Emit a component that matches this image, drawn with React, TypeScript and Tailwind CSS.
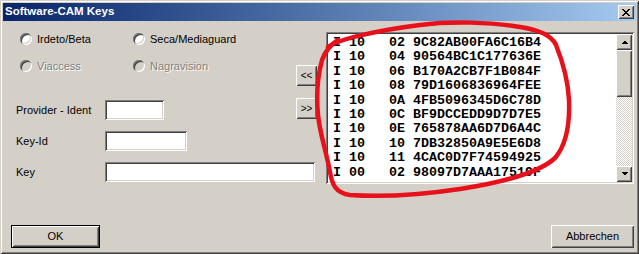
import clsx from "clsx"

const raised =
  "bg-[#d4d0c8] shadow-[inset_1px_1px_#fff,inset_-1px_-1px_#404040,inset_2px_2px_#d4d0c8,inset_-2px_-2px_#808080]"
const sunken =
  "shadow-[inset_1px_1px_#808080,inset_-1px_-1px_#fff,inset_2px_2px_#404040,inset_-2px_-2px_#d4d0c8]"

const rows = [
  "I 10   02 9C82AB00FA6C16B4",
  "I 10   04 90564BC1C177636E",
  "I 10   06 B170A2CB7F1B084F",
  "I 10   08 79D1606836964FEE",
  "I 10   0A 4FB5096345D6C78D",
  "I 10   0C BF9DCCEDD9D7D7E5",
  "I 10   0E 765878AA6D7D6A4C",
  "I 10   10 7DB32850A9E5E6D8",
  "I 10   11 4CAC0D7F74594925",
  "I 00   02 98097D7AAA17519F",
]

function Radio({ label, disabled }: { label: string; disabled?: boolean }) {
  return (
    <div className="flex h-[12px] items-center gap-[5px]">
      <span
        className={clsx(
          "h-[12px] w-[12px] shrink-0 rounded-full",
          sunken,
          disabled ? "bg-[#d4d0c8]" : "bg-white"
        )}
      />
      <span
        className={
          disabled ? "text-[#808080] [text-shadow:1px_1px_0_#fff]" : "text-black"
        }
      >
        {label}
      </span>
    </div>
  )
}

function Field({ label, width }: { label: string; width: string }) {
  return (
    <div className="flex h-[20px] items-center pl-[13px]">
      <span className="w-[89px] shrink-0">{label}</span>
      <div className={clsx("h-[20px] shrink-0 bg-white", sunken, width)} />
    </div>
  )
}

function Arrow({ down }: { down?: boolean }) {
  return (
    <div className={clsx("flex h-[16px] w-[16px] items-center justify-center", raised)}>
      <svg width="7" height="4" viewBox="0 0 7 4" shapeRendering="crispEdges">
        <polygon
          points={down ? "0,0 7,0 3.5,3.5" : "0,4 7,4 3.5,0.5"}
          fill="#000"
        />
      </svg>
    </div>
  )
}

function CloseGlyph() {
  const px: [number, number, number][] = [
    [0, 0, 2], [6, 0, 2],
    [1, 1, 2], [5, 1, 2],
    [2, 2, 4],
    [3, 3, 2],
    [2, 4, 4],
    [1, 5, 2], [5, 5, 2],
    [0, 6, 2], [6, 6, 2],
  ]
  return (
    <svg width="8" height="7" viewBox="0 0 8 7" shapeRendering="crispEdges">
      {px.map(([x, y, w], i) => (
        <rect key={i} x={x} y={y} width={w} height={1} fill="#000" />
      ))}
    </svg>
  )
}

export default function App() {
  return (
    <div className="relative h-[254px] w-[639px] overflow-hidden font-['Liberation_Sans',Arial,sans-serif] text-[11px] text-black">
      <div className="flex h-full w-full flex-col bg-[#d4d0c8] p-[3px] shadow-[inset_1px_1px_#d4d0c8,inset_-1px_-1px_#404040,inset_2px_2px_#fff,inset_-2px_-2px_#808080]">
        {/* title bar */}
        <div className="flex h-[18px] shrink-0 items-center justify-between bg-gradient-to-r from-[#0a246a] to-[#a6caf0] pl-[2px] pr-[2px]">
          <span className="text-[11.5px] font-bold text-white">Software-CAM Keys</span>
          <div className={clsx("flex h-[14px] w-[16px] items-center justify-center", raised)}>
            <CloseGlyph />
          </div>
        </div>

        <div className="flex flex-1 flex-col">
          <div className="mt-[11px] flex">
            {/* left column */}
            <div className="flex w-[293px] shrink-0 flex-col">
              <div className="mt-[1px] flex pl-[17px]">
                <div className="w-[113px]">
                  <Radio label="Irdeto/Beta" />
                </div>
                <Radio label="Seca/Mediaguard" />
              </div>
              <div className="mt-[15px] flex pl-[17px]">
                <div className="w-[113px]">
                  <Radio label="Viaccess" disabled />
                </div>
                <Radio label="Nagravision" disabled />
              </div>
              <div className="mt-[28px]">
                <Field label="Provider - Ident" width="w-[59px]" />
              </div>
              <div className="mt-[11px]">
                <Field label="Key-Id" width="w-[82px]" />
              </div>
              <div className="mt-[11px]">
                <Field label="Key" width="w-[210px]" />
              </div>
            </div>

            {/* move buttons */}
            <div className="flex w-[21px] shrink-0 flex-col">
              <button className={clsx("mt-[33px] flex h-[21px] items-center justify-center pb-[1px] text-[10px]", raised)}>
                &lt;&lt;
              </button>
              <button className={clsx("mt-[12px] flex h-[21px] items-center justify-center pb-[1px] text-[10px]", raised)}>
                &gt;&gt;
              </button>
            </div>

            {/* key list */}
            <div className={clsx("ml-[9px] flex h-[152px] w-[308px] shrink-0 bg-white p-[2px]", sunken)}>
              <div className="flex-1 overflow-hidden pl-[5px] pt-[2px] font-['Liberation_Mono',monospace] text-[13.33px] font-bold leading-[14.4px] whitespace-pre">
                {rows.map((r) => (
                  <div key={r}>{r}</div>
                ))}
              </div>
              <div className="flex w-[16px] flex-col">
                <Arrow />
                <div className="flex flex-1 flex-col bg-[repeating-conic-gradient(#fff_0_25%,#d4d0c8_0_50%)] bg-[length:2px_2px]">
                  <div className={clsx("h-[47px]", raised)} />
                </div>
                <Arrow down />
              </div>
            </div>
          </div>

          {/* bottom buttons */}
          <div className="mt-auto flex items-end justify-between pb-[3px] pl-[8px] pr-[2px]">
            <button className="h-[23px] w-[89px] border border-black">
              <div className={clsx("flex h-full w-full items-center justify-center", raised)}>OK</div>
            </button>
            <button className={clsx("flex h-[23px] w-[83px] items-center justify-center", raised)}>
              Abbrechen
            </button>
          </div>
        </div>
      </div>

      {/* red marker annotation */}
      <svg
        className="pointer-events-none absolute inset-0"
        width="639"
        height="254"
        viewBox="0 0 639 254"
        fill="none"
      >
        <path
          d="M328 47 C338 39, 380 30, 420 25 C450 21, 490 22, 520 27 C540 30, 552 36, 556 45 C562 60, 568 80, 569 100 C570 125, 566 145, 555 158 C540 172, 505 182, 460 189 C420 195, 380 197, 350 195 C336 193, 332 185, 330 172 C326 150, 320 135, 318 115 C316 95, 318 75, 322 60 C325 52, 330 45, 338 40"
          stroke="#e8111b"
          strokeWidth="4.5"
          strokeLinecap="round"
          strokeLinejoin="round"
        />
      </svg>
    </div>
  )
}
